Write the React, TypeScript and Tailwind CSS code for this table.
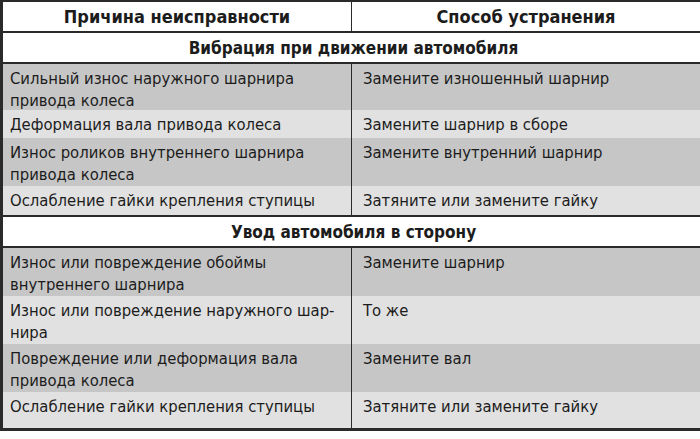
import React from 'react';

type Row = { cause: string[]; fix: string; dark: boolean; h: string };

const sections: { title: string; rows: Row[] }[] = [
  {
    title: 'Вибрация при движении автомобиля',
    rows: [
      { cause: ['Сильный износ наружного шарнира', 'привода колеса'], fix: 'Замените изношенный шарнир', dark: true, h: 'h-[46px]' },
      { cause: ['Деформация вала привода колеса'], fix: 'Замените шарнир в сборе', dark: false, h: 'h-[28px]' },
      { cause: ['Износ роликов внутреннего шарнира', 'привода колеса'], fix: 'Замените внутренний шарнир', dark: true, h: 'h-[48px]' },
      { cause: ['Ослабление гайки крепления ступицы'], fix: 'Затяните или замените гайку', dark: false, h: 'h-[29px]' },
    ],
  },
  {
    title: 'Увод автомобиля в сторону',
    rows: [
      { cause: ['Износ или повреждение обоймы', 'внутреннего шарнира'], fix: 'Замените шарнир', dark: true, h: 'h-[48px]' },
      { cause: ['Износ или повреждение наружного шар-', 'нира'], fix: 'То же', dark: false, h: 'h-[48px]' },
      { cause: ['Повреждение или деформация вала', 'привода колеса'], fix: 'Замените вал', dark: true, h: 'h-[48px]' },
      { cause: ['Ослабление гайки крепления ступицы'], fix: 'Затяните или замените гайку', dark: false, h: 'h-[36px]' },
    ],
  },
];

export default function App() {
  return (
    <div
      className="w-[700px] h-[439px] bg-white text-[#1c1c1c] overflow-hidden"
      style={{ fontFamily: '"Liberation Sans Narrow", "DejaVu Sans Condensed", "Arial Narrow", sans-serif' }}
    >
      <div className="border-t-2 border-l-[3px] border-b-[3px] border-[#2a2a2a]">
        {/* header */}
        <div className="grid grid-cols-[349px_1fr] h-[31px] border-b-2 border-[#2a2a2a] text-[18px]">
          <div className="border-r border-[#2a2a2a] flex items-center justify-center font-semibold">Причина неисправности</div>
          <div className="flex items-center justify-center font-semibold">Способ устранения</div>
        </div>
        {sections.map((s, si) => (
          <div key={si} className={si > 0 ? 'border-t-2 border-[#2a2a2a]' : ''}>
            <div className="h-[31px] flex items-center justify-center font-bold text-[17px] border-b-2 border-[#2a2a2a] pl-[4px] pt-[2px]">
              {s.title}
            </div>
            {s.rows.map((r, ri) => (
              <div
                key={ri}
                className={`grid grid-cols-[349px_1fr] ${r.h} text-[16.5px] leading-[22px] ${r.dark ? 'bg-[#c6c6c6]' : 'bg-[#e1e1e1]'}`}
              >
                <div className="border-r border-[#2a2a2a] pl-[7px] pr-2 pt-[4px] whitespace-nowrap">
                  {r.cause.map((line, li) => (
                    <div key={li}>{line}</div>
                  ))}
                </div>
                <div className="pl-[11px] pt-[4px]">{r.fix}</div>
              </div>
            ))}
          </div>
        ))}
      </div>
    </div>
  );
}
